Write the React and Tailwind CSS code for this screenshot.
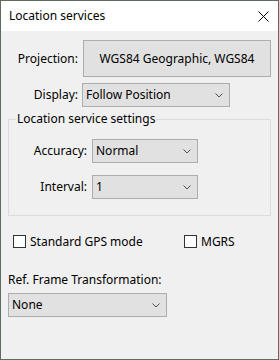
import React from 'react';

const Chevron = () => (
  <svg width="8" height="5" viewBox="0 0 8 5" className="shrink-0">
    <polyline points="0.5,0.5 4,4 7.5,0.5" fill="none" stroke="#505050" strokeWidth="1" />
  </svg>
);

const Select = ({ value, className }) => (
  <div className={`h-[24px] border border-[#adadad] bg-[#e1e1e1] flex items-center justify-between pl-[3px] pr-[6px] ${className}`}>
    <span>{value}</span>
    <Chevron />
  </div>
);

const Checkbox = ({ label, className }) => (
  <div className={`flex items-center h-[13px] ${className}`}>
    <div className="w-[13px] h-[13px] border border-[#333333] bg-white shrink-0" />
    <span className="ml-[4px] leading-[16px]">{label}</span>
  </div>
);

export default function App() {
  return (
    <div className="w-[279px] h-[360px] border border-[#5f6b5f] bg-[#f0f0f0] flex flex-col font-['Noto_Sans',sans-serif] text-[12px] text-black overflow-hidden">
      {/* Title bar */}
      <div className="h-[30px] bg-white flex items-center justify-between pl-[8px] pr-[9px] shrink-0">
        <span>Location services</span>
        <svg width="11" height="11" viewBox="0 0 11 11">
          <line x1="0.5" y1="0.5" x2="10.5" y2="10.5" stroke="#000" strokeWidth="1" />
          <line x1="10.5" y1="0.5" x2="0.5" y2="10.5" stroke="#000" strokeWidth="1" />
        </svg>
      </div>

      {/* Projection */}
      <div className="flex items-center mt-[9px] h-[37px]">
        <div className="w-[77px] text-right">Projection:</div>
        <button className="ml-[5px] w-[188px] h-[37px] border border-[#adadad] bg-[#e1e1e1] flex items-center justify-center">
          WGS84 Geographic, WGS84
        </button>
      </div>

      {/* Display */}
      <div className="flex items-center mt-[6px]">
        <div className="w-[77px] text-right">Display:</div>
        <Select value="Follow Position" className="ml-[4px] w-[148px]" />
      </div>

      {/* Group box */}
      <div className="mt-[12px] ml-[7px] w-[263px] border border-[#dcdcdc] pb-[16px]">
        <div className="-mt-[9px] ml-[7px] px-[1px] w-fit bg-[#f0f0f0] leading-[16px]">Location service settings</div>
        <div className="flex items-center mt-[12px]">
          <div className="w-[78px] text-right">Accuracy:</div>
          <Select value="Normal" className="ml-[5px] w-[106px]" />
        </div>
        <div className="flex items-center mt-[12px]">
          <div className="w-[78px] text-right">Interval:</div>
          <Select value="1" className="ml-[5px] w-[106px]" />
        </div>
      </div>

      {/* Checkboxes */}
      <div className="flex mt-[19px] ml-[12px]">
        <Checkbox label="Standard GPS mode" className="w-[171px]" />
        <Checkbox label="MGRS" />
      </div>

      {/* Ref frame */}
      <div className="mt-[24px] ml-[7px] leading-[16px]">Ref. Frame Transformation:</div>
      <Select value="None" className="mt-[5px] ml-[7px] w-[159px]" />
    </div>
  );
}
